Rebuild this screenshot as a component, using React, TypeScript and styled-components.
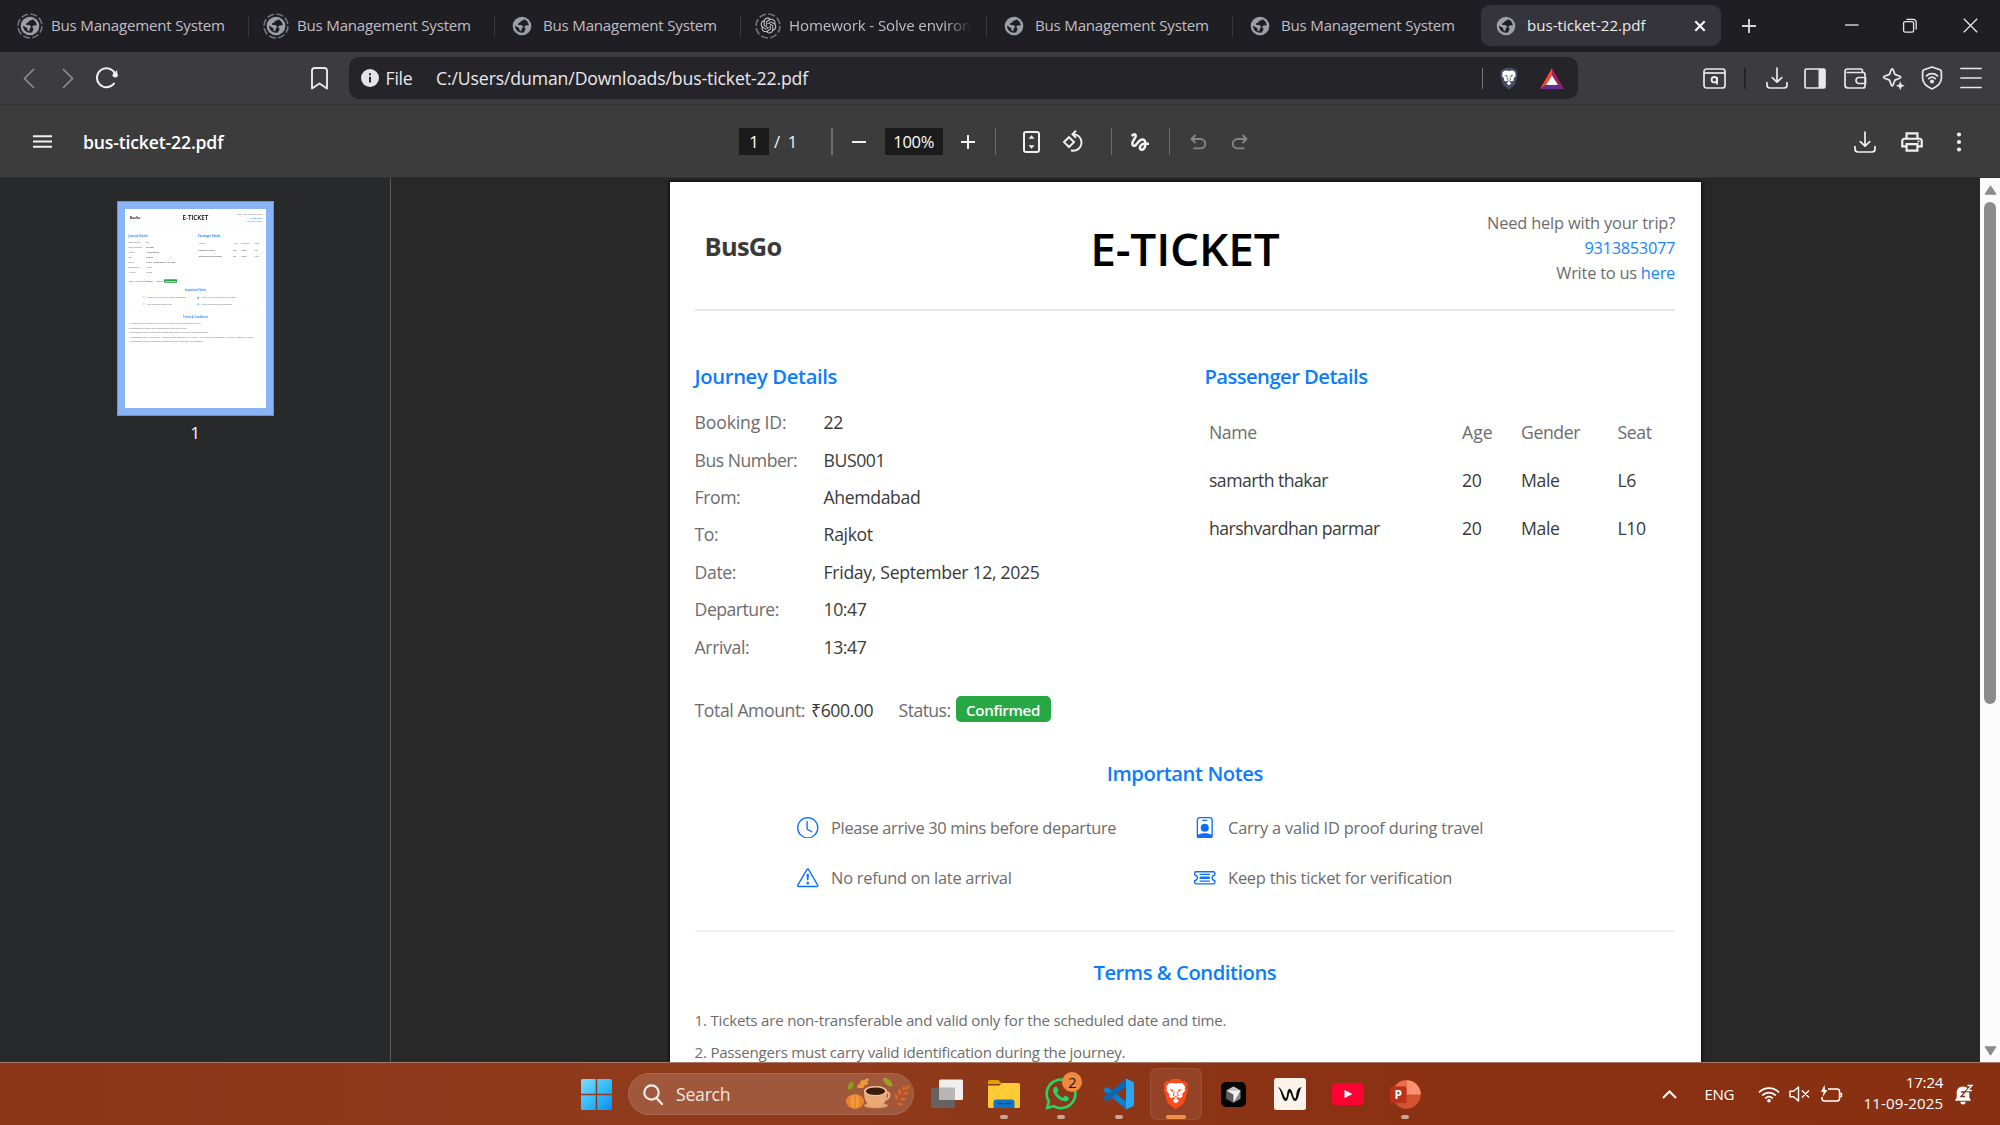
import React from "react";
import styled, { createGlobalStyle, css } from "styled-components";
import { BsClock, BsExclamationTriangle, BsPersonBadge, BsTicketDetailed } from "react-icons/bs";
import { MdOutlinePrint, MdGesture } from "react-icons/md";
import { FaWhatsapp } from "react-icons/fa";
import { RiOpenaiFill } from "react-icons/ri";

const Global = createGlobalStyle`
  * { box-sizing: border-box; }
  body {
    margin: 0;
    overflow: hidden;
    font-family: "Open Sans", "Noto Sans", sans-serif;
    background: #282828;
  }
  svg { display: block; flex: none; }
`;

interface TextProps {
  $size?: number;
  $track?: number;
  $weight?: number;
  $color?: string;
  $ml?: number;
}

const Text = styled.span<TextProps>`
  flex: none;
  white-space: pre;
  font-size: ${(p) => p.$size ?? 15.1}px;
  letter-spacing: ${(p) => p.$track ?? -0.014}em;
  font-weight: ${(p) => p.$weight ?? 400};
  color: ${(p) => p.$color ?? "inherit"};
  margin-left: ${(p) => p.$ml ?? 0}px;
`;

const Window = styled.div`
  width: 2000px;
  height: 1125px;
  display: flex;
  flex-direction: column;
  overflow: hidden;
`;

/* Centres an icon in a fixed width, after an optional space */
const Slot = styled.div<{ $w: number; $ml?: number; $color?: string }>`
  flex: none;
  width: ${(p) => p.$w}px;
  margin-left: ${(p) => p.$ml ?? 0}px;
  color: ${(p) => p.$color ?? "inherit"};
  display: flex;
  align-items: center;
  justify-content: center;
`;

const Rule = styled.div<{ $ml: number; $w?: number; $h?: number; $color?: string }>`
  flex: none;
  width: ${(p) => p.$w ?? 1}px;
  height: ${(p) => p.$h ?? 27}px;
  margin-left: ${(p) => p.$ml}px;
  background: ${(p) => p.$color ?? "#6c6c6c"};
`;

/* ---------- Tab strip ---------- */

const TabStrip = styled.div`
  flex: none;
  height: 52px;
  padding: 0 0 1px 3px;
  display: flex;
  align-items: center;
  background: #1f1e23;
  color: #bfbdc3;
`;

const Tab = styled.div<{ $active?: boolean; $divided?: boolean }>`
  flex: none;
  position: relative;
  width: 246px;
  height: 41px;
  padding-left: 14px;
  gap: 8px;
  display: flex;
  align-items: center;
  ${(p) =>
    p.$divided &&
    css`
      &::after {
        content: "";
        position: absolute;
        right: 0;
        top: 11px;
        width: 1px;
        height: 21px;
        background: #3a393f;
      }
    `}
  ${(p) =>
    p.$active &&
    css`
      width: 240px;
      margin-left: 2px;
      padding-left: 12px;
      border-radius: 9px;
      background: #35343a;
      color: #ececee;
    `}
`;

const TabLabel = styled(Text)`
  overflow: hidden;
  max-width: 184px;
  margin-top: -1px;
`;

const FadedLabel = styled(TabLabel)`
  mask-image: linear-gradient(90deg, #000 86%, transparent 100%);
`;

const Globe = () => (
  <svg width="20" height="20" viewBox="0 0 20 20">
    <circle cx="10" cy="10" r="9.3" fill="#9aa0a6" />
    <path
      d="M12.2 3.2c-.4 1.1-1.5 1.3-2.6 1.5-.9.2-.9 1.2-1.5 1.7-.8.6-2 .4-2.1 1.5-.1.9.7 1.2 1.6 1.2 1.5 0 2.8.1 3.2 1.3.3 1.1-.4 1.5-.9 2-.6.6-.2 1.7-.8 2.4-.4.5-1.2.5-1.5-.2-.3-.8.1-1.7-.5-2.4-.9-1-2.6-1.5-4.100-2.400.1 4 3.200 6.900 7 6.900.9 0 1.700-.2 2.500-.5-.2-.9.1-1.600.7-2.200.6-.600.400-1.300-.1-1.800-.5-.5-.9-1-.7-1.700.3-.9 1.300-1 2.200-1.100.8-.1 1.500-.4 2.200-.2-.3-2.700-2.100-5-4.600-6z"
      fill="#1f1e23"
    />
  </svg>
);

const RingedIcon = styled.div`
  position: relative;
  width: 26px;
  height: 26px;
  display: grid;
  place-items: center;
  > svg:first-child {
    position: absolute;
    inset: 0;
  }
`;

const Ringed = ({ children }: { children: React.ReactNode }) => (
  <RingedIcon>
    <svg width="26" height="26" viewBox="0 0 26 26">
      <circle cx="13" cy="13" r="12" fill="none" stroke="#77767c" strokeWidth="1.6" strokeDasharray="7 2.420" />
    </svg>
    {children}
  </RingedIcon>
);

const TabBar = () => (
  <TabStrip>
    {[0, 1].map((i) => (
      <Tab key={i} $divided>
        <Ringed>
          <Globe />
        </Ringed>
        <TabLabel>Bus Management System</TabLabel>
      </Tab>
    ))}
    <Tab $divided>
      <Slot $w={26}>
        <Globe />
      </Slot>
      <TabLabel>Bus Management System</TabLabel>
    </Tab>
    <Tab $divided>
      <Ringed>
        <RiOpenaiFill size={19} color="#c9c8cc" />
      </Ringed>
      <FadedLabel $track={-0.008}>Homework - Solve environ</FadedLabel>
    </Tab>
    <Tab $divided>
      <Slot $w={26}>
        <Globe />
      </Slot>
      <TabLabel>Bus Management System</TabLabel>
    </Tab>
    <Tab>
      <Slot $w={26}>
        <Globe />
      </Slot>
      <TabLabel>Bus Management System</TabLabel>
    </Tab>
    <Tab $active>
      <Slot $w={26}>
        <Globe />
      </Slot>
      <TabLabel $track={0.001}>bus-ticket-22.pdf</TabLabel>
      <Slot $w={16} $ml={38.5}>
        <svg width="12" height="12" viewBox="0 0 12 12" stroke="#f4f4f4" strokeWidth="2.200">
          <path d="M1.3 1.3l9.4 9.4M10.7 1.3l-9.4 9.4" />
        </svg>
      </Slot>
    </Tab>
    <Slot $w={20} $ml={18}>
      <svg width="16" height="16" viewBox="0 0 16 16" stroke="#d6d5d9" strokeWidth="1.900">
        <path d="M8 1v14M1 8h14" />
      </svg>
    </Slot>
    <Slot $w={20} $ml={83}>
      <svg width="16" height="16" viewBox="0 0 16 16" stroke="#e6e6e8" strokeWidth="1.300">
        <path d="M1 7h13.500" />
      </svg>
    </Slot>
    <Slot $w={20} $ml={38}>
      <svg width="16" height="16" viewBox="0 0 16 16" fill="none" stroke="#e6e6e8" strokeWidth="1.300">
        <rect x="1.600" y="3.600" width="10" height="10.500" rx="1.600" />
        <path d="M4.500 1.400h6.700a3 3 0 0 1 3 3v7" />
      </svg>
    </Slot>
    <Slot $w={20} $ml={40}>
      <svg width="15" height="15" viewBox="0 0 15 15" stroke="#e6e6e8" strokeWidth="1.300">
        <path d="M.8.8l13.400 13.400M14.200.8L.8 14.200" />
      </svg>
    </Slot>
  </TabStrip>
);

/* ---------- Address bar ---------- */

const NavBar = styled.div`
  flex: none;
  height: 53px;
  padding-left: 19px;
  display: flex;
  align-items: center;
  background: #3c3b40;
  border-bottom: 1px solid #333236;
  color: #e9e8ec;
`;

const UrlField = styled.div`
  flex: none;
  width: 1229px;
  height: 42px;
  margin-left: 20px;
  padding-left: 12px;
  display: flex;
  align-items: center;
  border-radius: 10px;
  background: #252429;
  color: #e9e8ec;
`;

const SHIELD = "M12 1.2l3.2 0 1.6 1.7 2-.3 2.2 2.7-.8 1.9.7 2-2.5 8.6c-.3 1-.8 1.7-1.6 2.3L12 23.6l-4.8-3.5c-.8-.6-1.3-1.3-1.6-2.3L3.1 9.2l.7-2L3 5.3l2.2-2.7 2 .3 1.6-1.7z";
const LION_FACE =
  "M12 4.6l2.6-.5 2.4.3 2 2.500-.5 1.300.5 1.300-2.300 3 .4 1.500-1.900 1.500-1.900-1-.6.700v.700l1.500.900-.200.800L12 19.300l-2-1.700-.2-.8 1.500-.9v-.7l-.6-.7-1.900 1-1.900-1.500.4-1.500-2.300-3 .5-1.300-.5-1.300 2-2.500 2.400-.3z";

const BraveShield = ({ size, shield }: { size: number; shield: string }) => (
  <svg width={size * 0.86} height={size} viewBox="2 0.500 20 23.600">
    <path d={SHIELD} fill={shield} />
    <path d={LION_FACE} fill="#fff" />
    <path d="M7.300 8.600l3.200.7-.8 1.500zM16.700 8.600l-3.200.7.8 1.500z" fill={shield} />
    <path d="M11 10.500l-.9 2.800 1.900.9 1.900-.9-.9-2.800" fill="none" stroke={shield} strokeWidth=".7" />
  </svg>
);

const DownloadIcon = () => (
  <svg width="22" height="22" viewBox="0 0 22 22" fill="none" stroke="currentColor" strokeWidth="1.700" strokeLinecap="round" strokeLinejoin="round">
    <path d="M11 1v14M6.300 10.600L11 15.200l4.700-4.600M1 15.500v2.500a3 3 0 0 0 3 3h14a3 3 0 0 0 3-3v-2.500" />
  </svg>
);

const AddressBar = () => (
  <NavBar>
    <Slot $w={20} $color="#8b8a8f">
      <svg width="12" height="21" viewBox="0 0 12 21" fill="none" stroke="currentColor" strokeWidth="1.700">
        <path d="M11 1L1.500 10.500 11 20" />
      </svg>
    </Slot>
    <Slot $w={20} $ml={19} $color="#8b8a8f">
      <svg width="12" height="21" viewBox="0 0 12 21" fill="none" stroke="currentColor" strokeWidth="1.700">
        <path d="M1 1l9.500 9.500L1 20" />
      </svg>
    </Slot>
    <Slot $w={24} $ml={17}>
      <svg width="24" height="22" viewBox="0 0 24 22" fill="none" stroke="#f2f2f4" strokeWidth="2">
        <path d="M19 16.500A9.500 9.500 0 1 1 20.200 7" strokeLinecap="round" />
        <circle cx="20.300" cy="8" r="2.500" fill="#f2f2f4" stroke="none" />
        <path d="M21.500 3.500v5h-4" strokeWidth="1.400" />
      </svg>
    </Slot>
    <Slot $w={20} $ml={190}>
      <svg width="17" height="23" viewBox="0 0 17 23" fill="none" stroke="currentColor" strokeWidth="1.900" strokeLinejoin="round">
        <path d="M1 3.500A2.500 2.500 0 0 1 3.500 1h10A2.500 2.500 0 0 1 16 3.500v18l-7.500-5-7.500 5z" />
      </svg>
    </Slot>
    <UrlField>
      <svg width="18" height="18" viewBox="0 0 18 18">
        <circle cx="9" cy="9" r="9" fill="#e4e3e8" />
        <path d="M9 7.800v5.700M9 4.300v1.900" stroke="#252429" strokeWidth="1.900" />
      </svg>
      <Text $size={17.65} $track={-0.013} $ml={6.5}>
        File
      </Text>
      <Text $size={17.65} $track={-0.007} $ml={23.5}>
        C:/Users/duman/Downloads/bus-ticket-22.pdf
      </Text>
      <Rule $ml={674} $h={21} $color="#77767b" />
      <Slot $w={20} $ml={16}>
        <BraveShield size={23} shield="#4b4c63" />
      </Slot>
      <Slot $w={24} $ml={21}>
        <svg width="24" height="21" viewBox="0 0 24 21">
          <path d="M12 0L0 21l6-4 6-8.500z" fill="#ff4724" />
          <path d="M12 0l12 21-6-4-6-8.500z" fill="#9e1f63" />
          <path d="M0 21h24l-6-4H6z" fill="#662d91" />
          <path d="M12 7.500L6 17h12z" fill="#fff" />
        </svg>
      </Slot>
    </UrlField>
    <Slot $w={24} $ml={124}>
      <svg width="23" height="21" viewBox="0 0 23 21" fill="none" stroke="currentColor" strokeWidth="1.700">
        <rect x="1" y="1" width="21" height="19" rx="2.500" />
        <path d="M1 5h21" />
        <circle cx="11.300" cy="11.700" r="2.700" strokeWidth="1.900" />
        <path d="M14 9v7.500" strokeWidth="1.900" />
      </svg>
    </Slot>
    <Rule $ml={18} $w={2} $h={21} $color="#242328" />
    <Slot $w={22} $ml={20}>
      <DownloadIcon />
    </Slot>
    <Slot $w={24} $ml={15}>
      <svg width="22" height="21" viewBox="0 0 22 21" fill="none" stroke="currentColor" strokeWidth="1.700">
        <rect x="1" y="1" width="20" height="19" rx="1.500" />
        <rect x="14.500" y="1" width="6.500" height="19" fill="currentColor" stroke="none" />
      </svg>
    </Slot>
    <Slot $w={24} $ml={16}>
      <svg width="23" height="21" viewBox="0 0 23 21" fill="none" stroke="currentColor" strokeWidth="1.700" strokeLinejoin="round">
        <path d="M18.500 4.500V3a2 2 0 0 0-2-2H3.500A2.300 2.300 0 0 0 1 3.300V17a3 3 0 0 0 3 3h15a2 2 0 0 0 2-2V6.500a2 2 0 0 0-2-2H2.500M21.500 9.500H15a3 3 0 0 0 0 6h6.500z" />
      </svg>
    </Slot>
    <Slot $w={24} $ml={14}>
      <svg width="23" height="23" viewBox="0 0 23 23" fill="none" stroke="currentColor" strokeWidth="1.700" strokeLinejoin="round">
        <path d="M10 2.200c.6-1.400 1.500-1.400 2 0l1.700 4.600 4.800 1.900c1.400.6 1.400 1.400 0 2l-4.800 1.800-1.700 4.700c-.5 1.400-1.400 1.400-2 0l-1.700-4.700-4.900-1.800c-1.400-.6-1.400-1.400 0-2l4.900-1.900z" transform="translate(-.8 .6)" />
        <path d="M18.300 14.200l1.300 3.200 3.200 1.300-3.200 1.300-1.300 3.200-1.300-3.200-3.200-1.300 3.200-1.300z" fill="currentColor" stroke="none" />
      </svg>
    </Slot>
    <Slot $w={24} $ml={15}>
      <svg width="22" height="24" viewBox="0 0 22 24" fill="none" stroke="currentColor" strokeWidth="1.700" strokeLinejoin="round" strokeLinecap="round">
        <path d="M11 1l8 2.700c.9.300 1.400 1 1.400 1.900V12c0 5-3.600 8.300-9.400 11-5.800-2.700-9.400-6-9.400-11V5.600c0-.9.5-1.600 1.400-1.900z" />
        <path d="M5.500 9.800c3.200-3 7.800-3 11 0M7.700 12.600c2-1.800 4.600-1.800 6.600 0" />
        <circle cx="11" cy="15.500" r="1.200" fill="currentColor" />
      </svg>
    </Slot>
    <Slot $w={24} $ml={15}>
      <svg width="22" height="22" viewBox="0 0 22 22" stroke="currentColor" strokeWidth="1.700" strokeLinecap="round">
        <path d="M1 1.500h20M1 11h20M1 20.500h20" />
      </svg>
    </Slot>
  </NavBar>
);

/* ---------- PDF toolbar ---------- */

const PdfToolbar = styled.div`
  flex: none;
  height: 73px;
  padding: 1px 0 0 33px;
  display: flex;
  align-items: center;
  background: #3c3c3c;
  border-bottom: 1px solid #303030;
  color: #f1f1f1;
`;

const DarkField = styled.div<{ $w: number; $ml: number }>`
  flex: none;
  width: ${(p) => p.$w}px;
  height: 27px;
  margin-left: ${(p) => p.$ml}px;
  display: flex;
  align-items: center;
  justify-content: center;
  background: #1b1b1b;
  color: #fff;
`;

const UndoIcon = () => (
  <svg width="17" height="16" viewBox="0 0 17 16" fill="none" stroke="currentColor" strokeWidth="1.900">
    <path d="M5.500 1L1.500 5l4 4M1.800 5h8.700a4.700 4.700 0 0 1 0 9.400H3.500" />
  </svg>
);

const Mirrored = styled.div`
  transform: scaleX(-1);
`;

const PdfBar = () => (
  <PdfToolbar>
    <svg width="19" height="13" viewBox="0 0 19 13" stroke="currentColor" strokeWidth="2.100">
      <path d="M0 1.200h19M0 6.500h19M0 11.800h19" />
    </svg>
    <Text $size={17.65} $track={-0.01} $weight={600} $ml={31} $color="#fff">
      bus-ticket-22.pdf
    </Text>
    <DarkField $w={30} $ml={515.5}>
      <Text $size={16.8}>1</Text>
    </DarkField>
    <Text $size={16.8} $ml={5}>
      /
    </Text>
    <Text $size={16.8} $ml={8}>
      1
    </Text>
    <Rule $ml={33.5} $w={2} $color="#707070" />
    <Slot $w={16} $ml={18}>
      <svg width="14" height="14" viewBox="0 0 14 14" stroke="currentColor" strokeWidth="2">
        <path d="M0 7h14" />
      </svg>
    </Slot>
    <DarkField $w={58} $ml={18}>
      <Text $size={16.5}>100%</Text>
    </DarkField>
    <Slot $w={16} $ml={17}>
      <svg width="14" height="14" viewBox="0 0 14 14" stroke="currentColor" strokeWidth="2">
        <path d="M0 7h14M7 0v14" />
      </svg>
    </Slot>
    <Rule $ml={19} />
    <Slot $w={18} $ml={27}>
      <svg width="17" height="22" viewBox="0 0 17 22" fill="none" stroke="currentColor" strokeWidth="2">
        <rect x="1" y="1" width="15" height="20" rx="2" />
        <path d="M8.500 4.200l3 3.500h-6zM8.500 17.800l3-3.500h-6z" fill="currentColor" stroke="none" />
      </svg>
    </Slot>
    <Slot $w={24} $ml={21}>
      <svg width="23" height="23" viewBox="0 0 23 23" fill="none" stroke="currentColor" strokeWidth="2">
        <path d="M7 7.200l5 4.900-5 4.900-5-4.900zM11.500 4.200a8.300 8.300 0 0 1 2.500 16.100 8 8 0 0 1-5-.1" />
        <path d="M14 .8l-3.500 3.500L14 7.800" />
      </svg>
    </Slot>
    <Rule $ml={25} />
    <Slot $w={24} $ml={16}>
      <MdGesture size={24} />
    </Slot>
    <Rule $ml={17} />
    <Slot $w={18} $ml={20} $color="#868686">
      <UndoIcon />
    </Slot>
    <Slot $w={18} $ml={23} $color="#868686">
      <Mirrored>
        <UndoIcon />
      </Mirrored>
    </Slot>
    <Slot $w={22} $ml={605}>
      <DownloadIcon />
    </Slot>
    <Slot $w={26} $ml={23}>
      <MdOutlinePrint size={26} />
    </Slot>
    <Slot $w={10} $ml={29}>
      <svg width="6" height="20" viewBox="0 0 6 20" fill="currentColor">
        <circle cx="3" cy="2.500" r="2.100" />
        <circle cx="3" cy="10" r="2.100" />
        <circle cx="3" cy="17.500" r="2.100" />
      </svg>
    </Slot>
  </PdfToolbar>
);

/* ---------- Ticket document ---------- */

const Sheet = styled.div`
  flex: none;
  width: 1031.500px;
  height: 1453px;
  padding: 0 26px 0 25px;
  background: #fff;
  color: #3a3a3a;
`;

const TicketHeader = styled.div`
  height: 129px;
  padding-top: 27.500px;
  display: grid;
  grid-template-columns: 1fr auto 1fr;
  align-items: start;
  border-bottom: 2.600px solid #e7e7e7;
  > * {
    height: 76px;
  }
`;

const Brand = styled(Text)`
  line-height: 73px;
  padding-left: 10px;
`;

const TicketTitle = styled(Text)`
  line-height: 76px;
`;

const Help = styled.div`
  display: flex;
  flex-direction: column;
  align-items: flex-end;
  line-height: 25.300px;
  color: #6c6c6c;
`;

const Accent = styled.span`
  color: #1a85ff;
`;

const Heading = styled.div<{ $track?: number; $center?: boolean; $mt?: number }>`
  height: 30px;
  line-height: 30px;
  margin-top: ${(p) => p.$mt ?? 0}px;
  font-size: 20.200px;
  font-weight: 600;
  letter-spacing: ${(p) => p.$track ?? -0.02}em;
  text-align: ${(p) => (p.$center ? "center" : "left")};
  color: #0a7cff;
`;

const Columns = styled.div`
  margin-top: 50.300px;
  display: grid;
  grid-template-columns: 509.800px 1fr;
`;

const JourneyList = styled.div`
  margin-top: 12.300px;
  display: grid;
  grid-template-columns: 129px 1fr;
  grid-auto-rows: 37.400px;
  align-items: center;
`;

const PassengerTable = styled.div`
  margin-top: 17.400px;
  padding-left: 4.600px;
  display: grid;
  grid-template-columns: 253px 59px 96.500px 1fr;
  grid-auto-rows: 47.600px;
  align-items: center;
`;

const Summary = styled.div`
  height: 30px;
  margin-top: 29.600px;
  display: flex;
  align-items: center;
`;

const Badge = styled.div`
  height: 26px;
  width: 95px;
  padding-top: 2px;
  margin: -1px 0 0 5px;
  display: flex;
  align-items: center;
  justify-content: center;
  border-radius: 5px;
  background: #28a745;
  color: #fff;
`;

const NotesGrid = styled.div`
  margin-top: 14.400px;
  padding-left: 102.800px;
  display: grid;
  grid-template-columns: 397px 1fr;
  grid-auto-rows: 50.500px;
  color: #6c6c6c;
`;

const Note = styled.div`
  display: flex;
  align-items: center;
  > svg {
    color: #0d6efd;
  }
`;

const Divider = styled.div`
  height: 2px;
  margin-top: 26.700px;
  background: #f1f1f1;
`;

const Terms = styled.div`
  margin-top: 17.500px;
  display: flex;
  flex-direction: column;
  line-height: 32.300px;
  color: #6c6c6c;
`;

const journey: [string, string, number, number][] = [
  ["Booking ID:", "22", -0.01, -0.02],
  ["Bus Number:", "BUS001", -0.029, -0.026],
  ["From:", "Ahemdabad", -0.025, -0.022],
  ["To:", "Rajkot", -0.025, -0.02],
  ["Date:", "Friday, September 12, 2025", -0.022, -0.0185],
  ["Departure:", "10:47", -0.029, -0.026],
  ["Arrival:", "13:47", -0.022, -0.026],
];

const passengers = [
  ["samarth thakar", "20", "Male", "L6"],
  ["harshvardhan parmar", "20", "Male", "L10"],
];

const terms: [string, number][] = [
  ["1. Tickets are non-transferable and valid only for the scheduled date and time.", -0.014],
  ["2. Passengers must carry valid identification during the journey.", -0.016],
  ["3. The company reserves the right to change the bus type in case of operational issues.", -0.016],
  ["4. Cancellation policy: 75% refund - 48 hours before departure; 50% refund - 24 hours before departure; No refund - less than 24 hours.", -0.016],
  ["5. The company is not responsible for delays caused by traffic or road conditions.", -0.016],
];

const Ticket = ({ visibleTerms = terms.length }: { visibleTerms?: number }) => (
  <Sheet>
    <TicketHeader>
      <Brand $size={25.4} $weight={700} $track={-0.028}>
        BusGo
      </Brand>
      <TicketTitle $size={46} $weight={600} $track={-0.004} $color="#000">
        E-TICKET
      </TicketTitle>
      <Help>
        <Text $size={16.4} $track={-0.011}>
          Need help with your trip?
        </Text>
        <Text $size={16.4} $track={-0.019} $color="#1a85ff">
          9313853077
        </Text>
        <Text $size={16.4} $track={-0.014}>
          Write to us <Accent>here</Accent>
        </Text>
      </Help>
    </TicketHeader>
    <Columns>
      <div>
        <Heading $track={-0.017}>Journey Details</Heading>
        <JourneyList>
          {journey.map(([label, value, lt, vt]) => (
            <React.Fragment key={label}>
              <Text $size={17.65} $track={lt} $color="#6c6c6c">
                {label}
              </Text>
              <Text $size={17.65} $track={vt}>
                {value}
              </Text>
            </React.Fragment>
          ))}
        </JourneyList>
      </div>
      <div>
        <Heading $track={-0.0265}>Passenger Details</Heading>
        <PassengerTable>
          {["Name", "Age", "Gender", "Seat"].map((h) => (
            <Text key={h} $size={17.65} $track={h === "Age" ? 0 : -0.0234} $color="#6c6c6c">
              {h}
            </Text>
          ))}
          {passengers.map((row) =>
            row.map((cell, i) => (
              <Text key={row[0] + i} $size={17.65} $track={i ? -0.022 : -0.03}>
                {cell}
              </Text>
            ))
          )}
        </PassengerTable>
      </div>
    </Columns>
    <Summary>
      <Text $size={17.65} $track={-0.025} $color="#6c6c6c">
        Total Amount:
      </Text>
      <Text $size={17.65} $track={-0.025} $ml={6}>
        ₹600.00
      </Text>
      <Text $size={17.65} $track={-0.032} $ml={25.5} $color="#6c6c6c">
        Status:
      </Text>
      <Badge>
        <Text $size={15.1} $weight={600} $track={-0.0236}>
          Confirmed
        </Text>
      </Badge>
    </Summary>
    <Heading $center $mt={32.9}>
      Important Notes
    </Heading>
    <NotesGrid>
      <Note>
        <BsClock size={21.5} />
        <Text $size={16.4} $track={-0.0206} $ml={12.2}>
          Please arrive 30 mins before departure
        </Text>
      </Note>
      <Note>
        <BsPersonBadge size={21.5} />
        <Text $size={16.4} $track={-0.013} $ml={12.2}>
          Carry a valid ID proof during travel
        </Text>
      </Note>
      <Note>
        <BsExclamationTriangle size={21.5} />
        <Text $size={16.4} $track={-0.016} $ml={12.2}>
          No refund on late arrival
        </Text>
      </Note>
      <Note>
        <BsTicketDetailed size={21.5} />
        <Text $size={16.4} $track={-0.014} $ml={12.2}>
          Keep this ticket for verification
        </Text>
      </Note>
    </NotesGrid>
    <Divider />
    <Heading $center $mt={24.7} $track={-0.0225}>
      {"Terms & Conditions"}
    </Heading>
    <Terms>
      {terms.slice(0, visibleTerms).map(([line, track]) => (
        <Text key={line} $track={track}>
          {line}
        </Text>
      ))}
    </Terms>
  </Sheet>
);

/* ---------- Viewer ---------- */

const Main = styled.div`
  flex: none;
  height: 884px;
  display: flex;
  overflow: hidden;
`;

const Sidebar = styled.div`
  flex: none;
  width: 391px;
  padding-top: 23px;
  display: flex;
  flex-direction: column;
  align-items: center;
  background: #28292a;
  border-right: 1px solid #5e5e5e;
  color: #fff;
`;

const Thumb = styled.div`
  flex: none;
  width: 157px;
  height: 214.500px;
  padding: 8px;
  background: #8ab4f8;
  border: 1px solid #6f92cc;
`;

const ThumbPage = styled.div`
  width: 141px;
  height: 198.500px;
  margin: -1px;
  overflow: hidden;
  background: #fff;
`;

const Scaled = styled.div`
  width: 1032px;
  transform: scale(0.13663);
  transform-origin: 0 0;
`;

const PageNumber = styled(Text)`
  margin: 5.500px 0 0;
  line-height: 24px;
`;

const Canvas = styled.div`
  flex: 1;
  padding: 4px 0 0 278.600px;
  background: #282828;
  overflow: hidden;
`;

const PageFrame = styled.div`
  width: 1031.500px;
  box-shadow: 0 0 3px 1px #0c0c0c;
`;

const Scrollbar = styled.div`
  flex: none;
  width: 20px;
  padding: 7px 0 6px;
  display: flex;
  flex-direction: column;
  align-items: center;
  justify-content: space-between;
  background: #fcfcfc;
`;

const ScrollTop = styled.div`
  display: flex;
  flex-direction: column;
  align-items: center;
  gap: 7px;
`;

const ScrollThumb = styled.div`
  width: 12px;
  height: 502px;
  border-radius: 6px;
  background: #8b8b8b;
`;

const ScrollArrow = ({ down }: { down?: boolean }) => (
  <svg width="13" height="10" viewBox="0 0 13 10" fill="#8b8b8b" stroke="#8b8b8b" strokeLinejoin="round">
    <path d={down ? "M1 .8h11L6.500 9.200z" : "M1 9.200h11L6.500.8z"} />
  </svg>
);

const Viewer = () => (
  <Main>
    <Sidebar>
      <Thumb>
        <ThumbPage>
          <Scaled>
            <Ticket />
          </Scaled>
        </ThumbPage>
      </Thumb>
      <PageNumber $size={16.5}>1</PageNumber>
    </Sidebar>
    <Canvas>
      <PageFrame>
        <Ticket visibleTerms={2} />
      </PageFrame>
    </Canvas>
    <Scrollbar>
      <ScrollTop>
        <ScrollArrow />
        <ScrollThumb />
      </ScrollTop>
      <ScrollArrow down />
    </Scrollbar>
  </Main>
);

/* ---------- Taskbar ---------- */

const Bar = styled.div`
  flex: none;
  height: 63px;
  padding-left: 581px;
  display: flex;
  align-items: center;
  background: linear-gradient(90deg, #8c3618 0%, #8f3b1c 40%, #8a3013 70%, #893012 100%);
  border-top: 1px solid #a87a68;
  color: #fff;
`;

const SearchPill = styled.div`
  flex: none;
  width: 286px;
  height: 42px;
  margin-left: 16px;
  padding-left: 14px;
  display: flex;
  align-items: center;
  border-radius: 21px;
  border: 1px solid #a8684f;
  background: #9f583c;
  color: #f3e6e0;
`;

const AppButton = styled.div<{ $active?: boolean }>`
  flex: none;
  position: relative;
  width: 52px;
  height: 52px;
  margin-right: 5.300px;
  display: flex;
  align-items: center;
  justify-content: center;
  border-radius: 6px;
  ${(p) =>
    p.$active &&
    css`
      background: #954327;
      border: 1px solid #9d5036;
    `}
`;

const Running = styled.div<{ $active?: boolean }>`
  position: absolute;
  bottom: ${(p) => (p.$active ? 0 : 1)}px;
  left: 50%;
  transform: translateX(-50%);
  width: ${(p) => (p.$active ? 20 : 8)}px;
  height: 4px;
  border-radius: 2px;
  background: ${(p) => (p.$active ? "#f0934a" : "#cda596")};
`;

const Count = styled.div`
  position: absolute;
  top: 4px;
  right: 5px;
  width: 20px;
  height: 20px;
  border-radius: 50%;
  display: grid;
  place-items: center;
  background: #f0893f;
  color: #2a1408;
`;

const Clock = styled.div`
  flex: none;
  width: 90px;
  margin: -3px 0 0 10.500px;
  display: flex;
  flex-direction: column;
  align-items: flex-end;
  line-height: 20.500px;
`;

const WindowsLogo = () => (
  <svg width="31" height="31" viewBox="0 0 31 31">
    <defs>
      <linearGradient id="win" x1="0" y1="0" x2="1" y2="1">
        <stop offset="0" stopColor="#7fdcff" />
        <stop offset=".5" stopColor="#35bcfb" />
        <stop offset="1" stopColor="#0b8df0" />
      </linearGradient>
    </defs>
    <path d="M1.500 0h13.200v14.700H0V1.500A1.500 1.500 0 0 1 1.500 0zM16.200 0h13.300A1.500 1.500 0 0 1 31 1.500v13.200H16.200zM0 16.200h14.700V31H1.500A1.500 1.500 0 0 1 0 29.500zM16.200 16.200H31v13.300a1.500 1.500 0 0 1-1.500 1.500H16.200z" fill="url(#win)" />
  </svg>
);

const AutumnArt = () => (
  <svg width="64" height="34" viewBox="0 0 64 34">
    <path d="M2.500 13c-2-4 .5-7.500 4-9 2 4 1.500 8-4 9z" fill="#8a9a1c" />
    <path d="M11 11.500c1-2 .5-3 1-4.500l2 .5c0-2.500 1-4 2.500-5l1.200 1.300C19 2 21 1 23 1.200c-.2 2-1 3.200-2 4.200l1.500 1.200c-1.500 1.600-3 2-4.800 2l.3 1.800c-2 .8-4 .3-5 .6z" fill="#ea9a3a" />
    <path d="M37 1c5-.2 9 2 9.500 8.500C41 10 38 6 37 1z" fill="#9ba324" />
    <path d="M48 28c3-7 7-13 14-20" stroke="#c2531a" strokeWidth="1.200" fill="none" />
    <path d="M53 12c1.800 2 2.200 4 1 6-1.800-1.500-2-3.700-1-6zM58 8.500c1 2 .8 3.500-.6 5-1.200-1.700-1-3.500.6-5zM63.500 9c-.4 2.500-2 3.500-4.200 3.600.4-2.200 1.800-3.400 4.200-3.600zM62.500 15.500c-1.500 1.800-3.500 2.300-5.500 1.500 1.500-1.800 3.300-2.200 5.500-1.500zM60 22c-2 1.500-4 1.600-6 .2 2-1.600 4-1.500 6-.2zM49.500 17c2 1.500 2.500 3.500 1.600 5.600-2-1.400-2.400-3.300-1.600-5.600zM57 27.500c-2.200 1-4 .7-5.700-.8 2.200-1.200 4-.9 5.700.8z" fill="#e06a22" stroke="#e06a22" strokeWidth=".8" />
    <path d="M8 17.500c.3-1.500 1-2.300 2.500-2.500" stroke="#6d7a1c" strokeWidth="1.800" fill="none" />
    <ellipse cx="9" cy="24.500" rx="9" ry="7.300" fill="#e9832a" />
    <ellipse cx="9" cy="24.500" rx="4.300" ry="7.300" fill="#f39a3f" />
    <path d="M9 17.500v14" stroke="#d06c1a" strokeWidth=".8" />
    <ellipse cx="30" cy="28.500" rx="12" ry="2.800" fill="#e0a070" />
    <path d="M39 15.500c6-2 6 7.500-1.500 7.500" fill="none" stroke="#eeb083" strokeWidth="2.200" />
    <path d="M18 13.500h23c.5 9-3 16.500-11.500 16.500S17.500 22.500 18 13.500z" fill="#eba878" />
    <ellipse cx="29.500" cy="14" rx="11.500" ry="5" fill="#f4c39b" />
    <ellipse cx="29.500" cy="14.300" rx="9.600" ry="3.800" fill="#3a1c0c" />
  </svg>
);

const Taskbar = () => (
  <Bar>
    <WindowsLogo />
    <SearchPill>
      <svg width="20" height="21" viewBox="0 0 20 21" fill="none" stroke="#f6ece8" strokeWidth="2.200">
        <circle cx="8.500" cy="8.500" r="7.200" />
        <path d="M13.500 14l5.500 6" strokeLinecap="round" />
      </svg>
      <Text $size={17.65} $ml={13}>
        Search
      </Text>
      <Slot $w={64} $ml={116}>
        <AutumnArt />
      </Slot>
    </SearchPill>
    <Slot $w={52} $ml={7}>
      <svg width="32" height="30" viewBox="0 0 32 30">
        <rect x="0" y="8.500" width="24" height="20.500" rx="1.500" fill="#67625f" />
        <rect x="8" y="0.500" width="24" height="20.500" rx="1.500" fill="#f1efee" />
        <path d="M8 8.500h16V21H9.500A1.500 1.500 0 0 1 8 19.500z" fill="#b9b6b4" />
      </svg>
    </Slot>
    <Slot $w={5} />
    <AppButton>
      <svg width="32" height="28" viewBox="0 0 32 28">
        <path d="M0 2A2 2 0 0 1 2 0h8.500l3.500 4h-14z" fill="#dfa100" />
        <path d="M0 5.500h11.500L14 3h16.500A1.500 1.500 0 0 1 32 4.500V26.500a1.500 1.500 0 0 1-1.500 1.500h-29A1.500 1.500 0 0 1 0 26.500z" fill="#fdcb35" />
        <path d="M5.500 28v-5.500a3 3 0 0 1 3-3h15a3 3 0 0 1 3 3V28z" fill="#0f74c8" />
        <path d="M9 23.500h14" stroke="#0a4f8f" strokeWidth="1.500" />
      </svg>
      <Running />
    </AppButton>
    <AppButton>
      <FaWhatsapp size={36} color="#25d366" />
      <Count>
        <Text $size={14.5}>2</Text>
      </Count>
      <Running />
    </AppButton>
    <AppButton>
      <svg width="31" height="32" viewBox="0 0 31 32">
        <path d="M.7 11.300l2.200-2a1.500 1.500 0 0 1 1.900 0L23 23.500V31L1 13.200a1.300 1.300 0 0 1-.3-1.900z" fill="#0d7fcf" />
        <path d="M.7 20.700l2.200 2a1.500 1.500 0 0 0 1.900 0L23 8.500V1L1 18.800a1.300 1.300 0 0 0-.3 1.900z" fill="#0868b3" />
        <path d="M23 .4l6.500 3A2.500 2.500 0 0 1 31 5.600v20.800a2.500 2.500 0 0 1-1.500 2.200l-6.500 3c-1.200.5-1.800 0-1.800 0 1 .6 1.800-.3 1.800-1.300V1.700C23 .7 22.200-.2 21.200.4c0 0 .6-.5 1.800 0z" fill="#2aa5f2" />
      </svg>
      <Running />
    </AppButton>
    <AppButton $active>
      <BraveShield size={32} shield="#fb4a1c" />
      <Running $active />
    </AppButton>
    <AppButton>
      <svg width="25" height="25" viewBox="0 0 25 25">
        <rect width="25" height="25" rx="5" fill="#050505" />
        <path d="M12.500 4.500l7 4v8.300l-7 4-7-4V8.500z" fill="#8c8c8c" />
        <path d="M5.500 8.500l7 4.200v8.100l-7-4z" fill="#5e5e5e" />
        <path d="M5.500 8.500l7-4 7 4z" fill="#c4c4c4" />
        <path d="M5.500 8.500h14l-7 12v-8z" fill="#f2f2f2" />
      </svg>
    </AppButton>
    <AppButton>
      <svg width="32" height="32" viewBox="0 0 32 32">
        <rect width="32" height="32" rx="2.500" fill="#fbf3ea" />
        <path d="M4 9.300c4.800.4 6 11 7.800 11 1.500 0 .9-9.500 3.700-9.500 3 0 3.500 9.700 5.500 9.700 1.300 0 1-3.500 1.700-6.500.5-2.300 1.800-4.400 5-5-2.600 2.300-2.800 14-6.500 14-3.200 0-4-8.500-5.400-8.500-1.400 0-.9 8.500-4.300 8.500C7.800 23 7.300 11.500 4 9.300z" fill="#0b0b0b" />
      </svg>
    </AppButton>
    <AppButton>
      <svg width="32" height="22" viewBox="0 0 32 22">
        <rect width="32" height="22" rx="4.500" fill="#ff0033" />
        <path d="M12.500 7v8l8-4z" fill="#fff" />
      </svg>
    </AppButton>
    <AppButton>
      <svg width="31" height="29" viewBox="0 0 31 29">
        <circle cx="16.500" cy="14.500" r="14.300" fill="#d35230" />
        <path d="M16.500.2a14.300 14.300 0 0 1 14.300 14.300H16.500z" fill="#ff9270" />
        <path d="M16.500.2v14.300H2.200A14.300 14.300 0 0 1 16.500.2z" fill="#ed6c47" />
        <rect x="0" y="6.500" width="16.500" height="16.500" rx="1.500" fill="#b7321a" />
        <text x="8.200" y="19" textAnchor="middle" fontFamily="Open Sans, sans-serif" fontSize="12" fontWeight="700" fill="#fff">
          P
        </text>
      </svg>
      <Running />
    </AppButton>
    <Slot $w={16} $ml={225}>
      <svg width="15" height="9" viewBox="0 0 15 9" fill="none" stroke="#fff" strokeWidth="2">
        <path d="M1 8l6.500-6.500L14 8" />
      </svg>
    </Slot>
    <Text $ml={27} $track={-0.0175}>
      ENG
    </Text>
    <Slot $w={22} $ml={23.5}>
      <svg width="22" height="17" viewBox="0 0 22 17" fill="none" stroke="#fff" strokeWidth="1.700">
        <path d="M1 6.300c5.700-5.600 14.300-5.600 20 0M4.200 9.400c4-3.700 9.600-3.700 13.600 0M7.300 12.300c2.200-2 5.200-2 7.400 0" />
        <circle cx="11" cy="14.800" r="1.800" fill="#fff" stroke="none" />
      </svg>
    </Slot>
    <Slot $w={22} $ml={9}>
      <svg width="21" height="16" viewBox="0 0 21 16" fill="none" stroke="#fff" strokeWidth="1.400" strokeLinejoin="round">
        <path d="M1 5.200h3.500L9.500 1v14l-5-4.200H1zM13 4.500l7 7M20 4.500l-7 7" />
      </svg>
    </Slot>
    <Slot $w={23} $ml={9}>
      <svg width="23" height="18" viewBox="0 0 23 18" fill="none" stroke="#fff" strokeWidth="1.500" strokeLinejoin="round">
        <path d="M8 4h9a2.500 2.500 0 0 1 2.500 2.500v7A2.500 2.500 0 0 1 17 16H4.500A2.500 2.500 0 0 1 2 13.500V12M19.500 8.500h2v3h-2" />
        <path d="M4.500 0L1 7h2.700L2.500 12 7.500 5H5z" fill="#fff" stroke="none" />
      </svg>
    </Slot>
    <Clock>
      <Text $track={-0.012}>17:24</Text>
      <Text $track={0.007}>11-09-2025</Text>
    </Clock>
    <Slot $w={20} $ml={11}>
      <svg width="20" height="21" viewBox="0 0 20 21">
        <path d="M9 2.500c4 0 6.300 2.800 6.300 6.200v4.500l1.700 3.600H1l1.700-3.600V8.700C2.700 5.300 5 2.500 9 2.500zM6.200 17.800h5.600c-.3 1.600-1.300 2.700-2.800 2.700s-2.500-1.100-2.800-2.700z" fill="#fff" />
        <path d="M7 8h4l-4 4.500h4" fill="none" stroke="#8a3013" strokeWidth="1.300" />
        <path d="M13.500 1.500h4.500l-4.500 5H18" fill="none" stroke="#8a3013" strokeWidth="3.400" />
        <path d="M13.500 1.500h4.500l-4.500 5H18" fill="none" stroke="#fff" strokeWidth="1.400" />
      </svg>
    </Slot>
  </Bar>
);

export default function App() {
  return (
    <Window>
      <Global />
      <TabBar />
      <AddressBar />
      <PdfBar />
      <Viewer />
      <Taskbar />
    </Window>
  );
}
